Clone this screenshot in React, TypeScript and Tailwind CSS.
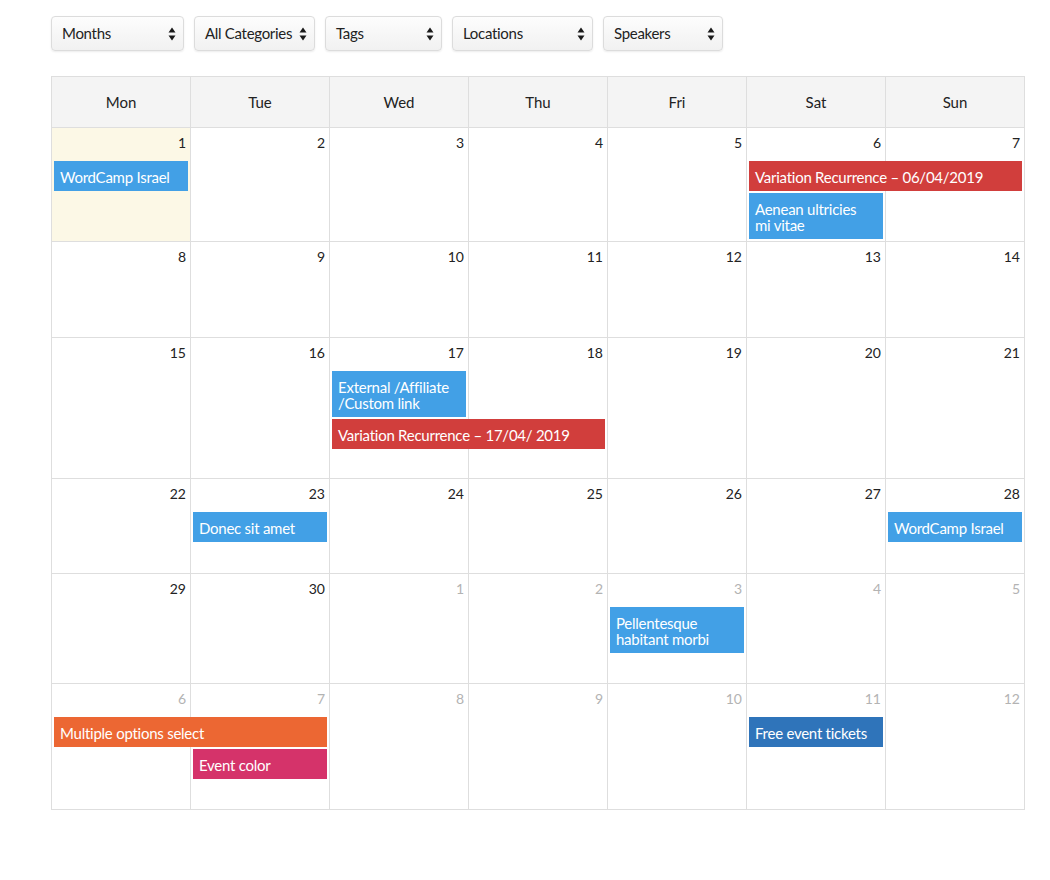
import React from "react";

type Ev = { col: number; span: number; row: number; lines: string[]; color: string };
type Week = { days: { n: number; other?: boolean; today?: boolean }[]; height: string; events: Ev[] };

const BLUE = "bg-[#42a0e6]";
const RED = "bg-[#d13e3c]";
const ORANGE = "bg-[#ec6733]";
const PINK = "bg-[#d5336a]";
const DBLUE = "bg-[#2f74ba]";

const colStart: Record<number, string> = {
  1: "col-start-1",
  2: "col-start-2",
  3: "col-start-3",
  4: "col-start-4",
  5: "col-start-5",
  6: "col-start-6",
  7: "col-start-7",
};
const colSpan: Record<number, string> = { 1: "col-span-1", 2: "col-span-2" };
const rowStart: Record<number, string> = { 1: "row-start-2", 2: "row-start-3" };

const weeks: Week[] = [
  {
    days: [{ n: 1, today: true }, { n: 2 }, { n: 3 }, { n: 4 }, { n: 5 }, { n: 6 }, { n: 7 }],
    height: "h-[114px]",
    events: [
      { col: 1, span: 1, row: 1, lines: ["WordCamp Israel"], color: BLUE },
      { col: 6, span: 2, row: 1, lines: ["Variation Recurrence – 06/04/2019"], color: RED },
      { col: 6, span: 1, row: 2, lines: ["Aenean ultricies", "mi vitae"], color: BLUE },
    ],
  },
  {
    days: [{ n: 8 }, { n: 9 }, { n: 10 }, { n: 11 }, { n: 12 }, { n: 13 }, { n: 14 }],
    height: "h-[96px]",
    events: [],
  },
  {
    days: [{ n: 15 }, { n: 16 }, { n: 17 }, { n: 18 }, { n: 19 }, { n: 20 }, { n: 21 }],
    height: "h-[141px]",
    events: [
      { col: 3, span: 1, row: 1, lines: ["External /Affiliate", "/Custom link"], color: BLUE },
      { col: 3, span: 2, row: 2, lines: ["Variation Recurrence – 17/04/ 2019"], color: RED },
    ],
  },
  {
    days: [{ n: 22 }, { n: 23 }, { n: 24 }, { n: 25 }, { n: 26 }, { n: 27 }, { n: 28 }],
    height: "h-[95px]",
    events: [
      { col: 2, span: 1, row: 1, lines: ["Donec sit amet"], color: BLUE },
      { col: 7, span: 1, row: 1, lines: ["WordCamp Israel"], color: BLUE },
    ],
  },
  {
    days: [
      { n: 29 },
      { n: 30 },
      { n: 1, other: true },
      { n: 2, other: true },
      { n: 3, other: true },
      { n: 4, other: true },
      { n: 5, other: true },
    ],
    height: "h-[110px]",
    events: [{ col: 5, span: 1, row: 1, lines: ["Pellentesque", "habitant morbi"], color: BLUE }],
  },
  {
    days: [
      { n: 6, other: true },
      { n: 7, other: true },
      { n: 8, other: true },
      { n: 9, other: true },
      { n: 10, other: true },
      { n: 11, other: true },
      { n: 12, other: true },
    ],
    height: "h-[126px]",
    events: [
      { col: 1, span: 2, row: 1, lines: ["Multiple options select"], color: ORANGE },
      { col: 2, span: 1, row: 2, lines: ["Event color"], color: PINK },
      { col: 6, span: 1, row: 1, lines: ["Free event tickets"], color: DBLUE },
    ],
  },
];

function Arrows() {
  return (
    <svg width="8" height="14" viewBox="0 0 8 14" className="shrink-0">
      <path d="M4 0.5 L7.5 5.6 L0.5 5.6 Z" fill="#1a1a1a" />
      <path d="M4 13.5 L7.5 8.4 L0.5 8.4 Z" fill="#1a1a1a" />
    </svg>
  );
}

function Select({ label, w }: { label: string; w: string }) {
  return (
    <div
      className={`${w} h-[35px] flex items-center justify-between pl-[10px] pr-[7px] rounded-[4px] border border-[#dcdcdc] bg-gradient-to-b from-[#fdfdfd] to-[#f1f1f1] shadow-[0_1px_2px_rgba(0,0,0,0.08)] text-[15px] tracking-[-0.3px] text-[#222]`}
    >
      <span className="whitespace-nowrap">{label}</span>
      <Arrows />
    </div>
  );
}

export default function App() {
  const headers = ["Mon", "Tue", "Wed", "Thu", "Fri", "Sat", "Sun"];
  return (
    <div
      className="w-[1050px] h-[880px] bg-white pt-[16px] pl-[51px]"
      style={{ fontFamily: "Lato, 'Open Sans', sans-serif" }}
    >
      <div className="flex gap-[10px]">
        <Select label="Months" w="w-[133px]" />
        <Select label="All Categories" w="w-[121px]" />
        <Select label="Tags" w="w-[117px]" />
        <Select label="Locations" w="w-[141px]" />
        <Select label="Speakers" w="w-[120px]" />
      </div>

      <div className="mt-[25px] w-[974px] border-l border-t border-[#dedede]">
        <div className="grid grid-cols-7 h-[51px]">
          {headers.map((h) => (
            <div
              key={h}
              className="flex items-center justify-center bg-[#f4f4f4] border-r border-b border-[#dedede] text-[15px] text-[#222]"
            >
              {h}
            </div>
          ))}
        </div>
        {weeks.map((wk, wi) => (
          <div key={wi} className={`grid grid-cols-7 grid-rows-[33px_auto_auto_1fr] ${wk.height}`}>
            {wk.days.map((d, di) => (
              <div
                key={di}
                className={`${colStart[di + 1]} row-span-full border-r border-b border-[#dedede] text-right pr-[4px] pt-[6px] text-[14px] leading-[18px] ${
                  d.today ? "bg-[#fcf8e6]" : "bg-white"
                } ${d.other ? "text-[#b3b3b3]" : "text-[#222]"}`}
              >
                {d.n}
              </div>
            ))}
            {wk.events.map((ev, ei) => (
              <div
                key={ei}
                className={`${colStart[ev.col]} ${colSpan[ev.span]} ${rowStart[ev.row]} ${ev.color} ${
                  ev.row === 2 ? "mt-[2px]" : ""
                } ml-[2px] mr-[3px] pl-[6px] pr-[4px] pt-[8px] pb-[6px] text-white text-[15px] leading-[16px] tracking-[-0.25px] whitespace-nowrap overflow-hidden`}
              >
                {ev.lines.map((l, li) => (
                  <div key={li}>{l}</div>
                ))}
              </div>
            ))}
          </div>
        ))}
      </div>
    </div>
  );
}
